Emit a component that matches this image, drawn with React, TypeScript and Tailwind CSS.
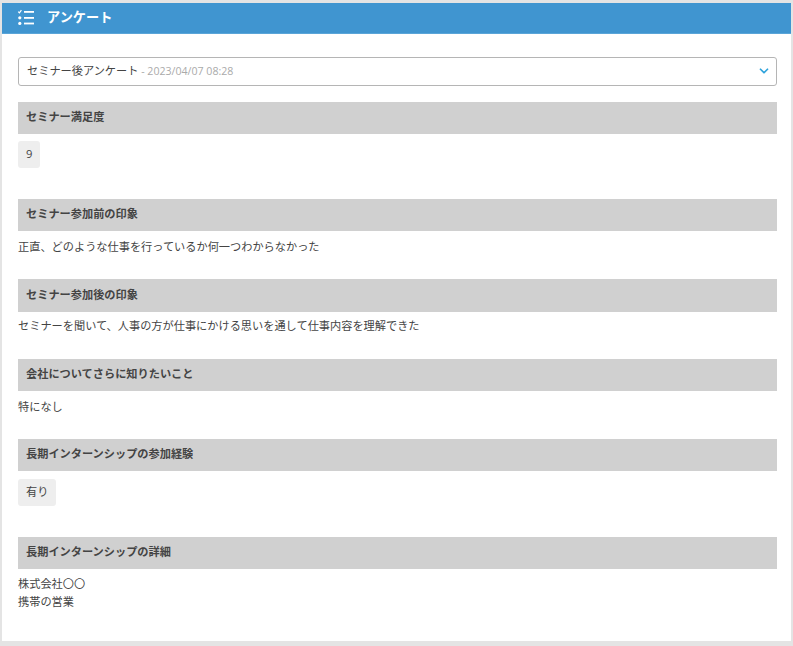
import { ChevronDown } from "lucide-react";

const fontStack = "[font-family:'Open_Sans','Noto_Sans_CJK_JP',sans-serif]";

function ListIcon() {
  return (
    <svg width="18" height="18" viewBox="0 0 18 18" fill="none" aria-hidden="true">
      <path d="M1.2 2.6 2.4 3.8 4.4 1.2" stroke="#fff" strokeWidth="1.2" />
      <circle cx="2.8" cy="8.8" r="1.6" fill="#fff" />
      <circle cx="2.8" cy="14.4" r="1.6" fill="#fff" />
      <rect x="7" y="2" width="10" height="1.8" fill="#fff" />
      <rect x="7" y="8" width="10" height="1.8" fill="#fff" />
      <rect x="7" y="13.6" width="10" height="1.8" fill="#fff" />
    </svg>
  );
}

function SectionTitle({ children, tall }: { children: string; tall?: boolean }) {
  return (
    <h3 className={`flex ${tall ? "h-[33px]" : "h-8"} items-center bg-[#d0d0d0] pb-px pl-2 text-[11.2px] font-bold text-[#444]`}>
      {children}
    </h3>
  );
}

function Badge({ children, top }: { children: string; top: string }) {
  return (
    <span className={`${top} inline-flex h-[27px] items-center rounded-[3px] bg-[#eeeeee] px-2 text-[11.2px] text-[#444]`}>
      {children}
    </span>
  );
}

export default function App() {
  return (
    <div className={`h-[646px] w-[793px] overflow-hidden bg-[#e4e4e4] pt-[3px] pb-[5px] pl-[2px] pr-[2px] ${fontStack}`}>
      <div className="h-full bg-white">
        {/* Header */}
        <div className="flex h-[31px] items-center gap-3 border-b border-[#5aa5d8] bg-[#4095d0] pl-[15px]">
          <ListIcon />
          <span className="text-[13.2px] font-bold text-white">アンケート</span>
        </div>

        <div className="pl-4 pr-3.5 pt-[23px]">
          {/* Select */}
          <div className="mb-4 flex h-[29px] items-center justify-between rounded-[3px] border border-[#b5b5b5] pb-px pl-2 pr-[5px]">
            <span className="text-[11.2px] text-[#444]">
              セミナー後アンケート
              <span className="text-[10.6px] text-[#aaaaaa]"> - 2023/04/07 08:28</span>
            </span>
            <ChevronDown className="h-3.5 w-3.5 text-[#2ea3dc]" strokeWidth={3} />
          </div>

          {/* Sections */}
          <section className="mb-[31px]">
            <SectionTitle>セミナー満足度</SectionTitle>
            <Badge top="mt-[7px]">9</Badge>
          </section>

          <section className="mb-[23px]">
            <SectionTitle>セミナー参加前の印象</SectionTitle>
            <p className="mt-[7px] text-[11.2px] leading-[18px] text-[#444]">
              正直、どのような仕事を行っているか何一つわからなかった
            </p>
          </section>

          <section className="mb-6">
            <SectionTitle tall>セミナー参加後の印象</SectionTitle>
            <p className="mt-[5px] text-[11.2px] leading-[18px] text-[#444]">
              セミナーを聞いて、人事の方が仕事にかける思いを通して仕事内容を理解できた
            </p>
          </section>

          <section className="mb-[23px]">
            <SectionTitle>会社についてさらに知りたいこと</SectionTitle>
            <p className="mt-[7px] text-[11.2px] leading-[18px] text-[#444]">特になし</p>
          </section>

          <section className="mb-[31px]">
            <SectionTitle>長期インターンシップの参加経験</SectionTitle>
            <Badge top="mt-2">有り</Badge>
          </section>

          <section>
            <SectionTitle>長期インターンシップの詳細</SectionTitle>
            <p className="mt-[6px] text-[11.2px] leading-[18px] text-[#444]">
              株式会社〇〇
              <br />
              携帯の営業
            </p>
          </section>
        </div>
      </div>
    </div>
  );
}
